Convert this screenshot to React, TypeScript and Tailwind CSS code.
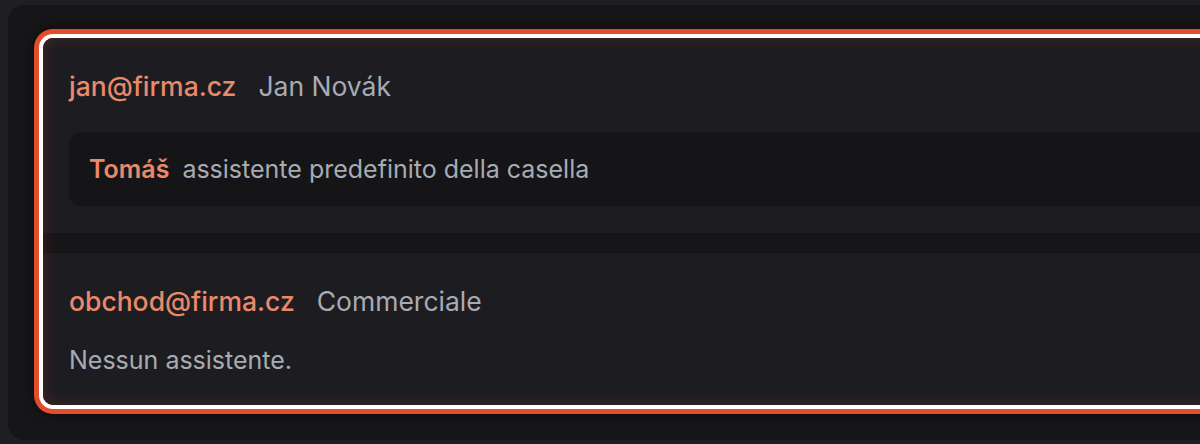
import React from 'react';

type Mailbox = {
  email: string;
  label: string;
  assistant?: { name: string; note: string };
};

const MAILBOXES: Mailbox[] = [
  {
    email: 'jan@firma.cz',
    label: 'Jan Novák',
    assistant: { name: 'Tomáš', note: 'assistente predefinito della casella' },
  },
  { email: 'obchod@firma.cz', label: 'Commerciale' },
];

export default function App() {
  return (
    <div
      className="w-full h-[444px] overflow-hidden bg-[#1f1f23] pt-[5px] pl-[8px]"
      style={{ fontFamily: 'Inter, "Noto Sans", sans-serif' }}
    >
      <div className="w-[1260px] h-[435px] rounded-2xl bg-[#161618] pt-[33px] pl-[35px]">
        {/* selected mailbox list */}
        <div className="relative w-[1220px] rounded-[10px] bg-[#161618] flex flex-col gap-5 shadow-[0_0_0_4px_#ffffff,0_0_0_9px_#e24e2c,0_0_10px_10px_rgba(0,0,0,0.45)]">
          {MAILBOXES.map((box, i) => (
            <div
              key={box.email}
              className={`bg-[#1d1d21] px-[26px] pt-[32px] flex flex-col ${
                i === 0 ? 'rounded-t-[10px] gap-[30px] pb-[27px]' : 'rounded-b-[10px] gap-[27px] pb-[29px]'
              }`}
            >
              <div className="flex items-baseline gap-[22px] text-[26.5px] leading-8">
                <span className="text-[#e8896b] font-medium">{box.email}</span>
                <span className="text-[#a7abb3]">{box.label}</span>
              </div>
              {box.assistant ? (
                <div className="rounded-xl bg-[#151517] px-5 py-[21px] flex items-baseline gap-[13px] text-[25px] leading-8">
                  <span className="text-[#e8896b] font-semibold">{box.assistant.name}</span>
                  <span className="text-[#a7abb3]">{box.assistant.note}</span>
                </div>
              ) : (
                <p className="text-[25px] leading-8 text-[#a7abb3]">Nessun assistente.</p>
              )}
            </div>
          ))}
          {/* inner glow of the selection ring */}
          <div className="pointer-events-none absolute inset-0 rounded-[10px] shadow-[inset_0_0_14px_rgba(226,78,44,0.22)]" />
        </div>
      </div>
    </div>
  );
}
